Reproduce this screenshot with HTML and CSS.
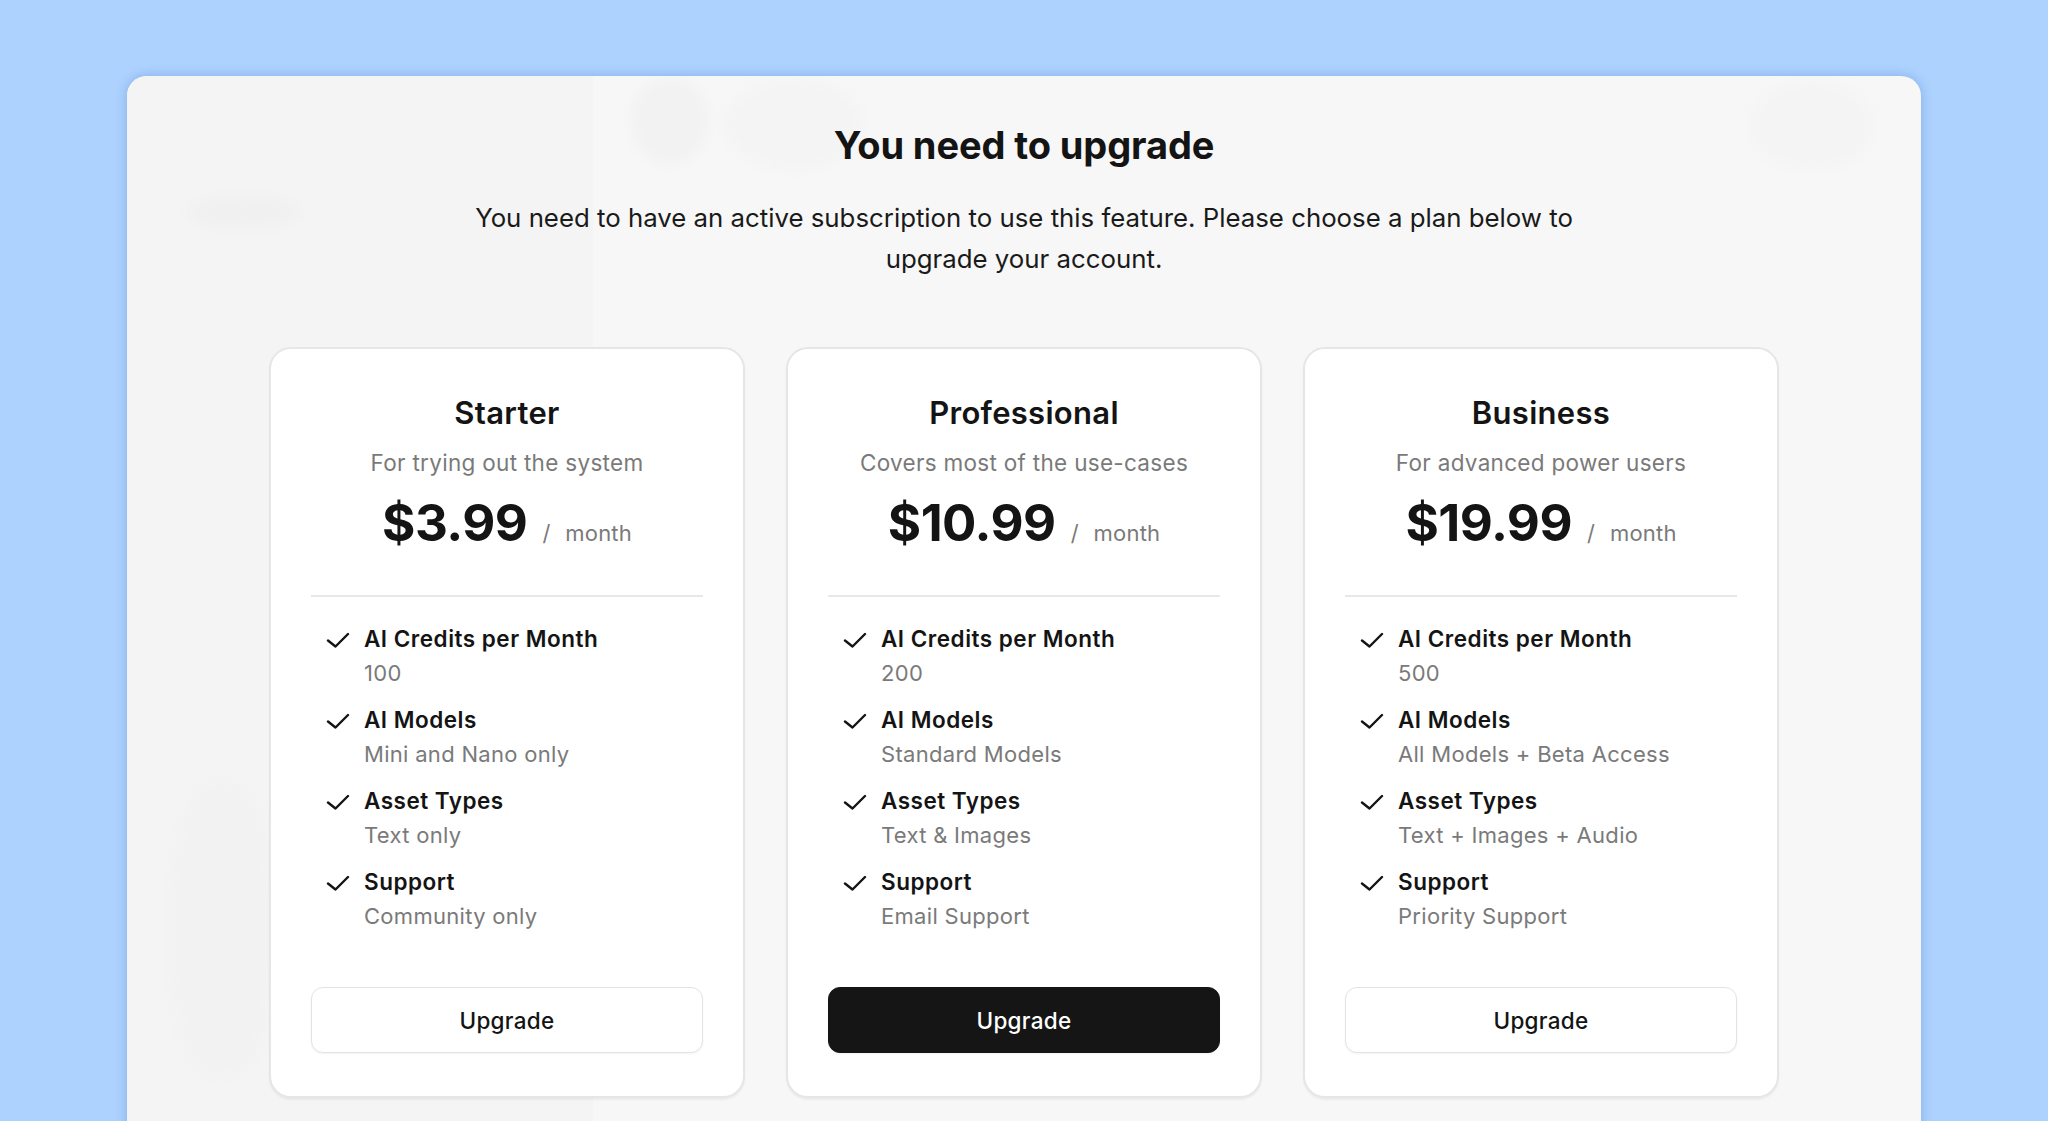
FILE: index.html
```html
<!DOCTYPE html>
<html lang="en">
<head>
<meta charset="utf-8">
<title>You need to upgrade</title>
<link rel="stylesheet" href="styles.css">
</head>
<body>
<div class="panel">
  <div class="backdrop">
    <div class="sidebar"></div>
    <span class="blob b1"></span>
    <span class="blob b2"></span>
    <span class="blob b3"></span>
    <span class="blob b4"></span>
    <span class="blob b5"></span>
  </div>
  <main class="content">
    <h1 class="title">You need to upgrade</h1>
    <p class="lead">You need to have an active subscription to use this feature. Please choose a plan below to upgrade your account.</p>

    <section class="plans">
      <article class="plan">
        <h2 class="plan-name">Starter</h2>
        <p class="plan-desc">For trying out the system</p>
        <div class="price"><span class="amount">$3.99</span><span class="slash">/</span><span class="period">month</span></div>
        <hr class="divider">
        <ul class="features">
          <li class="feature"><svg class="check" viewBox="0 0 24 16"><polyline points="2,8.5 9.5,14.5 22,2"/></svg><div><div class="f-title">AI Credits per Month</div><div class="f-value">100</div></div></li>
          <li class="feature"><svg class="check" viewBox="0 0 24 16"><polyline points="2,8.5 9.5,14.5 22,2"/></svg><div><div class="f-title">AI Models</div><div class="f-value">Mini and Nano only</div></div></li>
          <li class="feature"><svg class="check" viewBox="0 0 24 16"><polyline points="2,8.5 9.5,14.5 22,2"/></svg><div><div class="f-title">Asset Types</div><div class="f-value">Text only</div></div></li>
          <li class="feature"><svg class="check" viewBox="0 0 24 16"><polyline points="2,8.5 9.5,14.5 22,2"/></svg><div><div class="f-title">Support</div><div class="f-value">Community only</div></div></li>
        </ul>
        <button class="btn">Upgrade</button>
      </article>

      <article class="plan">
        <h2 class="plan-name">Professional</h2>
        <p class="plan-desc">Covers most of the use-cases</p>
        <div class="price"><span class="amount">$10.99</span><span class="slash">/</span><span class="period">month</span></div>
        <hr class="divider">
        <ul class="features">
          <li class="feature"><svg class="check" viewBox="0 0 24 16"><polyline points="2,8.5 9.5,14.5 22,2"/></svg><div><div class="f-title">AI Credits per Month</div><div class="f-value">200</div></div></li>
          <li class="feature"><svg class="check" viewBox="0 0 24 16"><polyline points="2,8.5 9.5,14.5 22,2"/></svg><div><div class="f-title">AI Models</div><div class="f-value">Standard Models</div></div></li>
          <li class="feature"><svg class="check" viewBox="0 0 24 16"><polyline points="2,8.5 9.5,14.5 22,2"/></svg><div><div class="f-title">Asset Types</div><div class="f-value">Text &amp; Images</div></div></li>
          <li class="feature"><svg class="check" viewBox="0 0 24 16"><polyline points="2,8.5 9.5,14.5 22,2"/></svg><div><div class="f-title">Support</div><div class="f-value">Email Support</div></div></li>
        </ul>
        <button class="btn btn-primary">Upgrade</button>
      </article>

      <article class="plan">
        <h2 class="plan-name">Business</h2>
        <p class="plan-desc">For advanced power users</p>
        <div class="price"><span class="amount">$19.99</span><span class="slash">/</span><span class="period">month</span></div>
        <hr class="divider">
        <ul class="features">
          <li class="feature"><svg class="check" viewBox="0 0 24 16"><polyline points="2,8.5 9.5,14.5 22,2"/></svg><div><div class="f-title">AI Credits per Month</div><div class="f-value">500</div></div></li>
          <li class="feature"><svg class="check" viewBox="0 0 24 16"><polyline points="2,8.5 9.5,14.5 22,2"/></svg><div><div class="f-title">AI Models</div><div class="f-value">All Models + Beta Access</div></div></li>
          <li class="feature"><svg class="check" viewBox="0 0 24 16"><polyline points="2,8.5 9.5,14.5 22,2"/></svg><div><div class="f-title">Asset Types</div><div class="f-value">Text + Images + Audio</div></div></li>
          <li class="feature"><svg class="check" viewBox="0 0 24 16"><polyline points="2,8.5 9.5,14.5 22,2"/></svg><div><div class="f-title">Support</div><div class="f-value">Priority Support</div></div></li>
        </ul>
        <button class="btn">Upgrade</button>
      </article>
    </section>
  </main>
</div>
</body>
</html>
```
FILE: styles.css
```css
* { box-sizing: border-box; }

html, body {
  margin: 0;
  height: 100%;
  overflow: hidden;
}

body {
  background: #add2fe;
  font-family: Inter, "Noto Sans", "Liberation Sans", sans-serif;
  color: #171717;
  padding: 76px 127px 0;
}

.panel {
  position: relative;
  height: 1100px;
  background: #f7f7f7;
  border-radius: 20px 20px 0 0;
  box-shadow: 0 0 10px 2px rgba(70, 120, 200, 0.28);
  overflow: hidden;
}

.backdrop {
  position: absolute;
  inset: 0;
  pointer-events: none;
}

.sidebar {
  position: absolute;
  left: 0;
  top: 0;
  bottom: 0;
  width: 466px;
  background: #f4f4f4;
}

.blob {
  position: absolute;
  border-radius: 50%;
  background: #f2f2f2;
  filter: blur(5px);
}
.b1 { left: 504px; top: 2px; width: 78px; height: 86px; }
.b2 { left: 598px; top: 2px; width: 137px; height: 92px; background: #f4f4f4; }
.b3 { left: 1623px; top: 5px; width: 124px; height: 88px; background: #f4f4f4; }
.b4 { left: 62px; top: 120px; width: 110px; height: 32px; background: #f0f0f0; }
.b5 { left: 45px; top: 708px; width: 100px; height: 290px; border-radius: 40%; background: #f2f2f2; }

.content {
  position: relative;
  padding-top: 46px;
  text-align: center;
}

.title {
  margin: 0;
  font-size: 38px;
  line-height: 46px;
  font-weight: 700;
  letter-spacing: -0.1px;
  color: #141414;
}

.lead {
  margin: 29px auto 0;
  max-width: 1110px;
  font-size: 25.8px;
  line-height: 41px;
  font-weight: 400;
  color: #1a1a1a;
}

.plans {
  margin-top: 68px;
  display: grid;
  grid-template-columns: repeat(3, 476px);
  column-gap: 41px;
  justify-content: center;
}

.plan {
  background: #fff;
  border: 2px solid #e6e6e6;
  border-radius: 22px;
  box-shadow: 0 2px 2px rgba(0, 0, 0, 0.05);
  padding: 44px 40px 43px;
  display: flex;
  flex-direction: column;
}

.plan-name {
  margin: 0;
  font-size: 31px;
  line-height: 39px;
  font-weight: 600;
  letter-spacing: 0.3px;
  color: #141414;
}

.plan-desc {
  margin: 16px 0 0;
  font-size: 22.5px;
  line-height: 30px;
  letter-spacing: 0.3px;
  color: #7a7a7a;
}

.price {
  margin-top: 15px;
  display: flex;
  justify-content: center;
  align-items: baseline;
  line-height: 60px;
}

.amount {
  font-size: 51px;
  font-weight: 700;
  letter-spacing: -0.5px;
  color: #141414;
}

.slash {
  margin-left: 15px;
  font-size: 22px;
  color: #7a7a7a;
}

.period {
  margin-left: 15px;
  font-size: 22px;
  letter-spacing: 0.2px;
  color: #7a7a7a;
}

.divider {
  margin: 32px 0 0;
  border: 0;
  border-top: 2px solid #e8e8e8;
  height: 0;
}

.features {
  list-style: none;
  margin: 25px 0 0;
  padding: 0 0 0 15px;
  display: flex;
  flex-direction: column;
  gap: 13px;
  text-align: left;
}

.feature {
  display: flex;
  align-items: flex-start;
  gap: 14px;
}

.check {
  width: 24px;
  height: 16px;
  margin-top: 10px;
  flex: none;
  fill: none;
  stroke: #141414;
  stroke-width: 2.4;
  stroke-linecap: round;
  stroke-linejoin: round;
}

.f-title {
  font-size: 22.5px;
  line-height: 34px;
  font-weight: 600;
  letter-spacing: 0.5px;
  color: #141414;
}

.f-value {
  font-size: 22px;
  line-height: 34px;
  letter-spacing: 0.3px;
  color: #7a7a7a;
}

.btn {
  margin-top: 54px;
  height: 66px;
  width: 100%;
  border: 1.5px solid #e3e3e3;
  border-radius: 12px;
  background: #fff;
  box-shadow: 0 1px 2px rgba(0, 0, 0, 0.05);
  font-family: inherit;
  font-size: 22.5px;
  font-weight: 500;
  letter-spacing: 0.3px;
  color: #141414;
  cursor: pointer;
}

.btn-primary {
  background: #151515;
  border-color: #151515;
  color: #fff;
}
```
